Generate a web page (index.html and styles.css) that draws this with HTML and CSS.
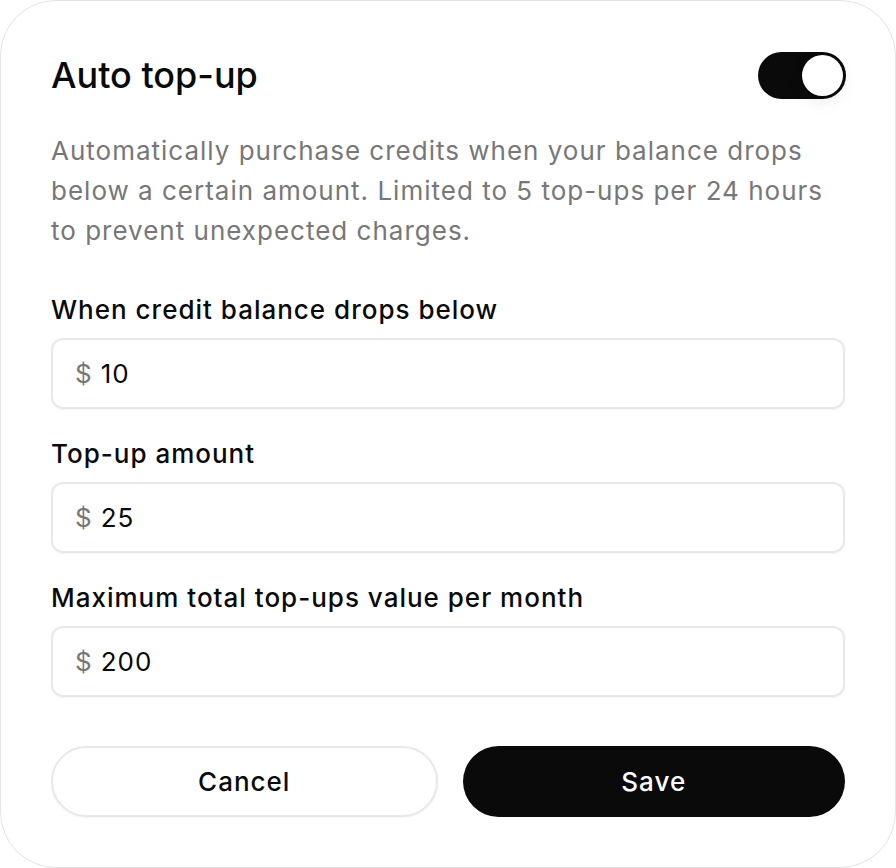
FILE: index.html
```html
<!DOCTYPE html>
<html>
<head>
<meta charset="utf-8">
<link rel="stylesheet" href="styles.css">
</head>
<body>
<div class="card">
  <div class="header">
    <h1 class="title">Auto top-up</h1>
    <div class="toggle"><div class="knob"></div></div>
  </div>
  <p class="desc">Automatically purchase credits when your balance drops below a certain amount. Limited to 5 top-ups per 24 hours to prevent unexpected charges.</p>
  <div class="fields">
    <div class="field">
      <label class="label">When credit balance drops below</label>
      <div class="input"><span class="cur">$</span><span class="val">10</span></div>
    </div>
    <div class="field">
      <label class="label">Top-up amount</label>
      <div class="input"><span class="cur">$</span><span class="val">25</span></div>
    </div>
    <div class="field">
      <label class="label">Maximum total top-ups value per month</label>
      <div class="input"><span class="cur">$</span><span class="val">200</span></div>
    </div>
  </div>
  <div class="actions">
    <button class="btn btn-cancel">Cancel</button>
    <button class="btn btn-save">Save</button>
  </div>
</div>
</body>
</html>
```
FILE: styles.css
```css
html, body {
  margin: 0;
  padding: 0;
  background: #ffffff;
}
body {
  font-family: Inter, "Noto Sans", sans-serif;
  color: #0a0a0a;
}
.card {
  box-sizing: border-box;
  width: 896px;
  height: 868px;
  border: 1px solid #e3e3e3;
  border-radius: 56px;
  background: #fff;
  padding: 50px 50px;
}
.header {
  display: flex;
  align-items: center;
  justify-content: space-between;
  height: 48px;
}
.title {
  margin: 0;
  font-size: 36px;
  font-weight: 500;
  line-height: 44px;
  letter-spacing: 0;
}
.toggle {
  box-sizing: border-box;
  width: 88px;
  height: 47px;
  border-radius: 24px;
  background: #0a0a0a;
  padding: 3px;
  display: flex;
  justify-content: flex-end;
  align-items: center;
  margin-right: -1px;
}
.knob {
  width: 41px;
  height: 41px;
  border-radius: 50%;
  background: #fff;
  box-shadow: 0 6px 16px rgba(0,0,0,0.08);
}
.desc {
  margin: 32px 0 0;
  font-size: 26px;
  line-height: 40px;
  letter-spacing: 1px;
  color: #777777;
}
.fields {
  margin-top: 41px;
  display: flex;
  flex-direction: column;
  gap: 27px;
}
.field {
  display: flex;
  flex-direction: column;
}
.label {
  font-size: 26px;
  font-weight: 500;
  line-height: 36px;
  letter-spacing: 1px;
  margin-bottom: 10px;
}
.input {
  box-sizing: border-box;
  height: 71px;
  border: 2px solid #e8e8e8;
  border-radius: 12px;
  box-shadow: 0 1px 2px rgba(0,0,0,0.05);
  display: flex;
  align-items: center;
  padding: 0 22px;
  font-size: 26px;
  letter-spacing: 1px;
}
.cur {
  color: #777777;
  margin-right: 8px;
}
.val {
  color: #0a0a0a;
}
.actions {
  display: flex;
  gap: 25px;
  margin-top: 49px;
}
.btn {
  flex: 1 1 0;
  width: 0;
  height: 71px;
  padding: 0;
  border-radius: 36px;
  font-family: Inter, "Noto Sans", sans-serif;
  font-size: 26px;
  font-weight: 500;
  letter-spacing: 1px;
  cursor: pointer;
}
.btn-cancel {
  background: #fff;
  color: #0a0a0a;
  border: 2px solid #e8e8e8;
  box-shadow: 0 1px 2px rgba(0,0,0,0.05);
}
.btn-save {
  background: #0a0a0a;
  color: #fff;
  border: none;
}
```
